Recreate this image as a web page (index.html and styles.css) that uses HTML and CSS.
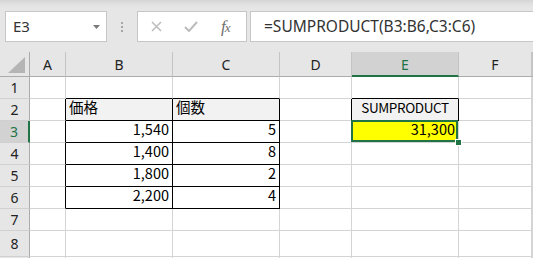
FILE: index.html
```html
<!DOCTYPE html>
<html lang="ja">
<head>
    <meta charset="UTF-8">
    <title>SUMPRODUCT</title>
    <link rel="stylesheet" href="styles.css">
</head>
<body>
    <div class="toolbar">
        <div class="namebox">
            <span>E3</span>
            <svg class="caret" width="7" height="4" viewBox="0 0 7 4"><path d="M0 0H7L3.5 4Z" fill="#7a7a7a"/></svg>
        </div>
        <div class="grip">
            <svg width="2" height="10" viewBox="0 0 2 10"><rect y="0" width="2" height="2" fill="#a6a6a6"/><rect y="4" width="2" height="2" fill="#a6a6a6"/><rect y="8" width="2" height="2" fill="#a6a6a6"/></svg>
        </div>
        <div class="fxbox">
            <svg class="cancel" width="11" height="11" viewBox="0 0 11 11"><path d="M1 1L10 10M10 1L1 10" stroke="#bcbcbc" stroke-width="1.5"/></svg>
            <svg class="enter" width="14" height="11" viewBox="0 0 14 11"><path d="M1 6L5 10L13 1" stroke="#bcbcbc" stroke-width="2" fill="none"/></svg>
            <i class="fx">f<span>x</span></i>
        </div>
        <div class="formula">=SUMPRODUCT(B3:B6,C3:C6)</div>
    </div>

    <div class="sheet">
        <!-- header row -->
        <div class="corner">
            <svg width="17" height="16" viewBox="0 0 17 16"><path d="M17 0V16H0Z" fill="#b5b5b5"/></svg>
        </div>
        <div class="col-head">A</div>
        <div class="col-head">B</div>
        <div class="col-head">C</div>
        <div class="col-head">D</div>
        <div class="col-head active">E</div>
        <div class="col-head">F</div>
        <div class="col-head"></div>

        <!-- row 1 -->
        <div class="row-head">1</div>
        <div class="cell"></div>
        <div class="cell line-b"></div>
        <div class="cell line-b"></div>
        <div class="cell"></div>
        <div class="cell line-b"></div>
        <div class="cell"></div>
        <div class="cell"></div>

        <!-- row 2 -->
        <div class="row-head">2</div>
        <div class="cell line-r"></div>
        <div class="cell boxed label">価格</div>
        <div class="cell boxed label">個数</div>
        <div class="cell line-r"></div>
        <div class="cell boxed label center">SUMPRODUCT</div>
        <div class="cell"></div>
        <div class="cell"></div>

        <!-- row 3 -->
        <div class="row-head active">3</div>
        <div class="cell line-r"></div>
        <div class="cell boxed num">1,540</div>
        <div class="cell boxed num">5</div>
        <div class="cell"></div>
        <div class="cell num result selected">31,300</div>
        <div class="cell"></div>
        <div class="cell"></div>

        <!-- row 4 -->
        <div class="row-head">4</div>
        <div class="cell line-r"></div>
        <div class="cell boxed num">1,400</div>
        <div class="cell boxed num">8</div>
        <div class="cell"></div>
        <div class="cell"></div>
        <div class="cell"></div>
        <div class="cell"></div>

        <!-- row 5 -->
        <div class="row-head">5</div>
        <div class="cell line-r"></div>
        <div class="cell boxed num">1,800</div>
        <div class="cell boxed num">2</div>
        <div class="cell"></div>
        <div class="cell"></div>
        <div class="cell"></div>
        <div class="cell"></div>

        <!-- row 6 -->
        <div class="row-head">6</div>
        <div class="cell line-r"></div>
        <div class="cell boxed num">2,200</div>
        <div class="cell boxed num">4</div>
        <div class="cell"></div>
        <div class="cell"></div>
        <div class="cell"></div>
        <div class="cell"></div>

        <!-- row 7 -->
        <div class="row-head">7</div>
        <div class="cell"></div>
        <div class="cell"></div>
        <div class="cell"></div>
        <div class="cell"></div>
        <div class="cell"></div>
        <div class="cell"></div>
        <div class="cell"></div>

        <!-- row 8 -->
        <div class="row-head">8</div>
        <div class="cell"></div>
        <div class="cell"></div>
        <div class="cell"></div>
        <div class="cell"></div>
        <div class="cell"></div>
        <div class="cell"></div>
        <div class="cell"></div>

        <!-- row 9, only its top edge shows -->
        <div class="row-head"></div>
        <div class="cell"></div>
        <div class="cell"></div>
        <div class="cell"></div>
        <div class="cell"></div>
        <div class="cell"></div>
        <div class="cell"></div>
        <div class="cell"></div>
    </div>
</body>
</html>
```

FILE: styles.css
```css
* {
    margin: 0;
    padding: 0;
    box-sizing: border-box;
}

body {
    width: 533px;
    height: 258px;
    overflow: hidden;
    background-color: #fff;
    font-family: 'Noto Sans', sans-serif;
    color: #222;
}

/* formula bar */

.toolbar {
    height: 52px;
    padding-top: 11px;
    display: flex;
    align-items: flex-start;
    background: linear-gradient(#d4d4d4 0, #e1e1e1 4px, #e6e6e6 8px);
}

.namebox {
    width: 102px;
    height: 31px;
    margin-left: 5px;
    padding: 0 6px 0 7px;
    display: flex;
    align-items: center;
    justify-content: space-between;
    background-color: #fff;
    border: 1px solid #c6c6c6;
    font-size: 15px;
    color: #333;
}

.namebox span {
    margin-top: -1px;
}

.grip {
    width: 30px;
    height: 31px;
    display: flex;
    align-items: center;
    justify-content: center;
}

.fxbox {
    width: 110px;
    height: 31px;
    display: flex;
    align-items: center;
    background-color: #fff;
    border: 1px solid #c6c6c6;
}

.fxbox .cancel {
    margin-left: 13px;
}

.fxbox .enter {
    margin-left: 22px;
}

.fx {
    margin-left: 23px;
    font-family: 'Liberation Serif', serif;
    font-size: 17px;
    color: #6e6e6e;
    letter-spacing: -1px;
}

.fx span {
    font-size: 13px;
}

.formula {
    flex: 1;
    height: 31px;
    margin-left: 3px;
    padding-left: 13px;
    background-color: #fff;
    border: 1px solid #c6c6c6;
    border-right: none;
    font-size: 15.5px;
    line-height: 28px;
    color: #333;
    white-space: nowrap;
}

/* sheet grid */

.sheet {
    display: grid;
    grid-template-columns: 30px 36px 107px 107px 72px 107px 73px 1fr;
    grid-template-rows: 25px repeat(7, 22px) 26px 22px;
}

.corner,
.col-head,
.row-head {
    background-color: #e6e6e6;
    font-size: 14px;
    color: #222;
}

.corner {
    display: flex;
    align-items: flex-end;
    justify-content: flex-end;
    padding: 0 4px 3px 0;
    border-right: 1px solid #ababab;
    border-bottom: 1px solid #ababab;
}

.col-head {
    display: flex;
    align-items: center;
    justify-content: center;
    border-right: 1px solid #c4c4c4;
    border-bottom: 1px solid #ababab;
    padding-top: 1px;
}

.row-head {
    display: flex;
    align-items: center;
    justify-content: center;
    border-right: 1px solid #ababab;
    border-bottom: 1px solid #d0d0d0;
}

.col-head.active {
    background-color: #d2d2d2;
    color: #217346;
    border-bottom: 2px solid #217346;
    padding-top: 2px;
}

.row-head.active {
    background-color: #d2d2d2;
    color: #217346;
    border-right: 2px solid #217346;
}

.cell {
    border-right: 1px solid #d4d4d4;
    border-bottom: 1px solid #d4d4d4;
    font-family: 'Noto Sans CJK JP', sans-serif;
    font-size: 14.5px;
    line-height: 16px;
    color: #000;
    white-space: nowrap;
}

.cell.line-b {
    border-bottom-color: #000;
}

.cell.line-r {
    border-right-color: #000;
}

.cell.boxed {
    border-right-color: #000;
    border-bottom-color: #000;
}

.cell.label {
    background-color: #f2f2f2;
    padding-left: 3px;
}

.cell.center {
    text-align: center;
    padding-left: 0;
    font-size: 13.5px;
    letter-spacing: -0.4px;
    line-height: 17px;
}

.cell.num {
    text-align: right;
    padding-right: 3px;
}

.cell.result {
    background-color: #ffff00;
}

.selected {
    position: relative;
}

.selected::before {
    content: "";
    position: absolute;
    top: -1px;
    left: -1px;
    right: 0;
    bottom: 0;
    border: 2px solid #217346;
}

.selected::after {
    content: "";
    position: absolute;
    right: -4px;
    bottom: -4px;
    width: 5px;
    height: 5px;
    background-color: #217346;
    border: 1px solid #fff;
    box-sizing: content-box;
}
```
